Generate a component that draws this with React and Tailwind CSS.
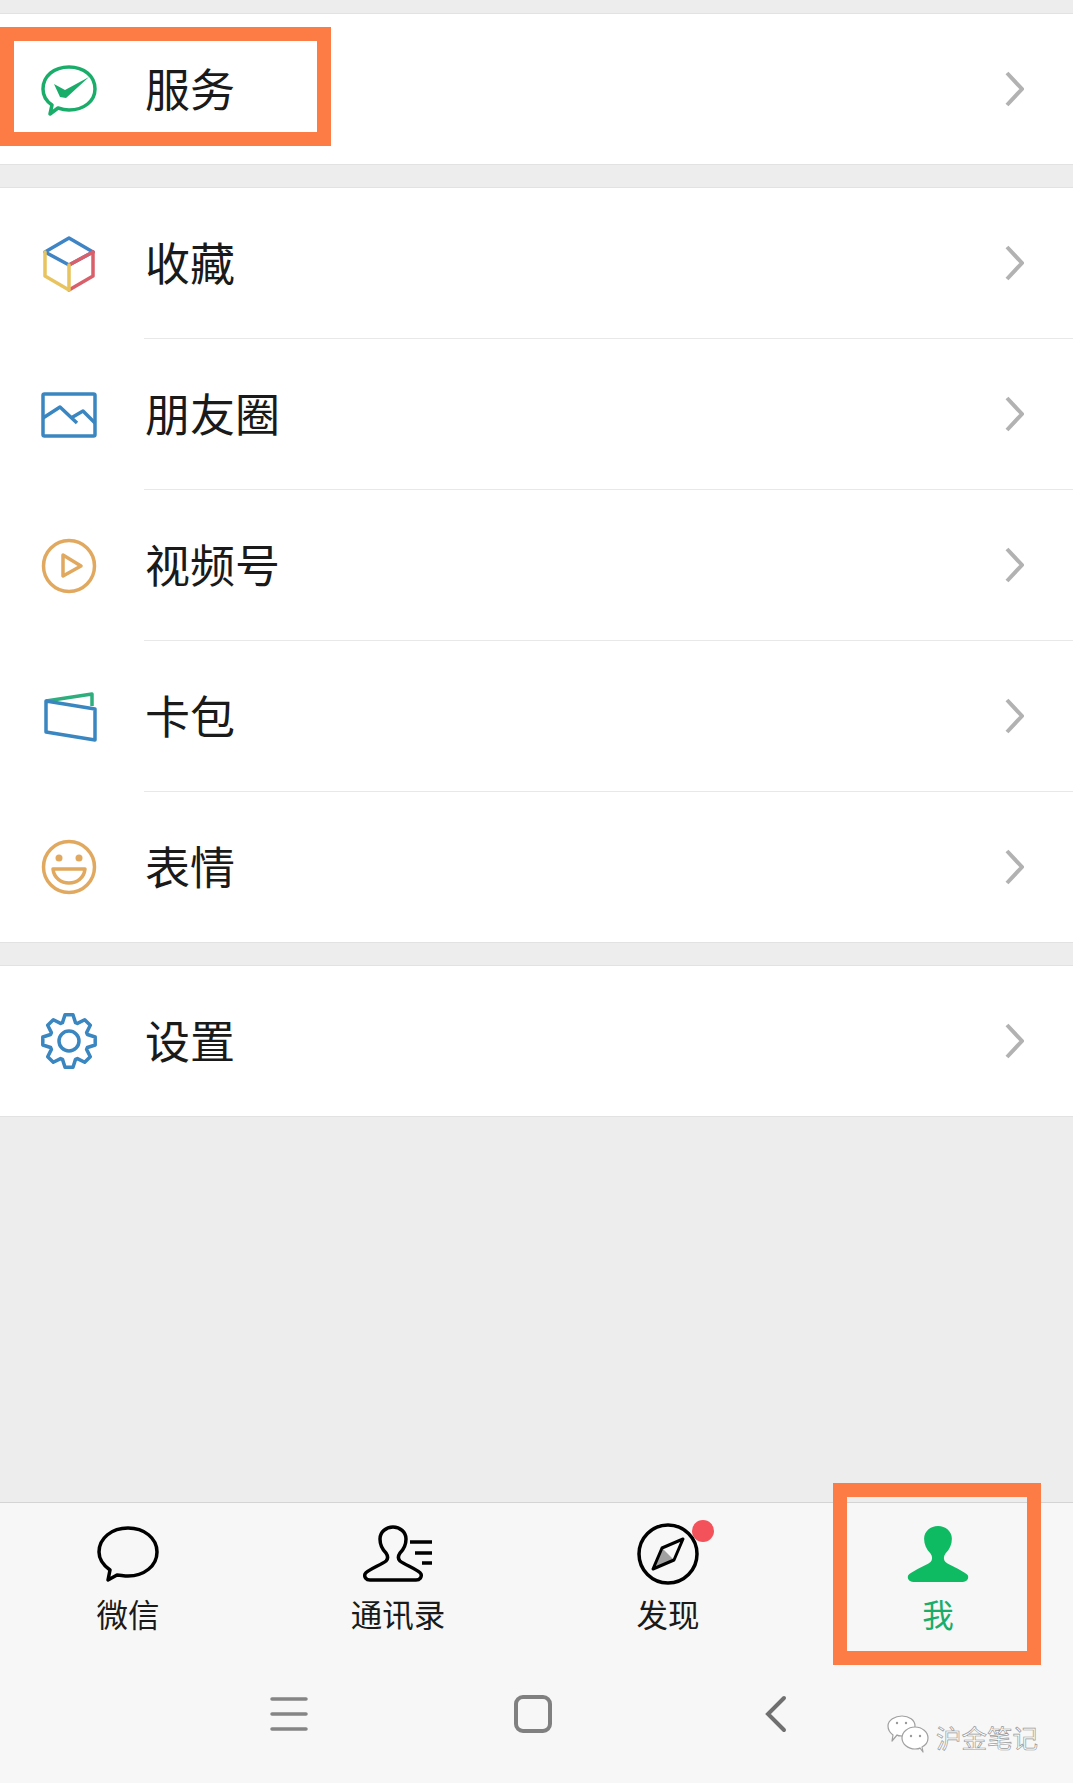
import React from 'react';

const GREEN = '#1aad6a';
const BLUE = '#3a86c0';
const GOLD = '#e0a95f';

// 8 tooth gear outline, points worked out once
const gearPath = () => {
  const pts = [];
  for (let i = 0; i < 8; i++) {
    const a = (i * Math.PI) / 4 - Math.PI / 2;
    const at = (r, d) => [29 + r * Math.cos(a + d), 29 + r * Math.sin(a + d)].map((n) => n.toFixed(1)).join(' ');
    pts.push(at(19.5, -0.34), at(26.5, -0.15), at(26.5, 0.15), at(19.5, 0.34));
  }
  return 'M' + pts.join(' L') + ' Z';
};

const ServiceIcon = () => (
  <svg width="58" height="58" viewBox="0 0 58 58" fill="none">
    <path d="M10 54 L12 45 C6 41 3 35 3 29 C3 16 14 7 29 7 C44 7 55 16 55 29 C55 41 44 50 29 50 C25 50 21 49 18 48 Z" stroke={GREEN} strokeWidth="3.5" strokeLinejoin="round" />
    <path d="M14 24 L25 30 L49 17 L26 38 L20 37 Z" fill={GREEN} />
  </svg>
);

const CubeIcon = () => (
  <svg width="58" height="60" viewBox="0 0 58 60" fill="none" strokeWidth="3.5" strokeLinejoin="round" strokeLinecap="round">
    <path d="M5 19 L29 5 L53 19 L29 32 Z" stroke="#3f84c4" />
    <path d="M53 19 L53 43 L29 57" stroke="#d9606a" />
    <path d="M29 32 L53 19" stroke="#d9606a" />
    <path d="M5 19 L5 43 L29 57 L29 32" stroke="#e8c45f" />
  </svg>
);

const MomentsIcon = () => (
  <svg width="58" height="58" viewBox="0 0 58 58" fill="none" stroke={BLUE} strokeWidth="3.5" strokeLinejoin="round">
    <rect x="3" y="9" width="52" height="42" rx="1.5" />
    <path d="M3 33 L20 22 L37 38 M31 33 L43 26 L55 38" />
  </svg>
);

const PlayIcon = () => (
  <svg width="58" height="58" viewBox="0 0 58 58" fill="none" stroke={GOLD} strokeWidth="3.5" strokeLinejoin="round">
    <circle cx="29" cy="30" r="25.5" />
    <path d="M23 19 L41 30 L23 40 Z" />
  </svg>
);

const CardIcon = () => (
  <svg width="58" height="58" viewBox="0 0 58 58" fill="none" strokeWidth="3.5" strokeLinejoin="round">
    <path d="M6 14 L52 7 L52 19" stroke="#2fae7d" />
    <path d="M6 14 L55 22 L55 53 L6 45 Z" stroke={BLUE} />
  </svg>
);

const SmileIcon = () => (
  <svg width="58" height="58" viewBox="0 0 58 58" fill="none" stroke={GOLD} strokeWidth="3.5" strokeLinejoin="round">
    <circle cx="29" cy="29" r="25.5" />
    <circle cx="19" cy="20" r="3.5" fill={GOLD} stroke="none" />
    <circle cx="39" cy="20" r="3.5" fill={GOLD} stroke="none" />
    <path d="M13 31 H45 C44 40 37 45 29 45 C21 45 14 40 13 31 Z" />
  </svg>
);

const GearIcon = () => (
  <svg width="58" height="58" viewBox="0 0 58 58" fill="none" stroke={BLUE} strokeWidth="3.5" strokeLinejoin="round">
    <path d={gearPath()} />
    <circle cx="29" cy="29" r="10" />
  </svg>
);

const Chevron = () => (
  <svg width="20" height="36" viewBox="0 0 20 36" fill="none" stroke="#b2b2b2" strokeWidth="4">
    <path d="M3 2 L18 18 L3 34" />
  </svg>
);

const personPath = 'M7 55 H53 C57 55 59 52 58 49 C56 45 42 40 37 36 C35 34 35 31 37 28 C41 24 43 19 43 14 C43 7 37 2 30 2 C23 2 17 7 17 14 C17 19 19 24 23 28 C25 31 25 34 23 36 C18 40 4 45 2 49 C1 52 3 55 7 55 Z';

const ChatTab = () => (
  <svg width="62" height="58" viewBox="0 0 62 58" fill="none" stroke="#000" strokeWidth="3.5" strokeLinejoin="round">
    <path d="M11 55 L13 45 C6 40 2 34 2 27 C2 13 15 3 31 3 C47 3 60 13 60 27 C60 41 47 51 31 51 C27 51 23 50 20 50 Z" />
  </svg>
);

const ContactsTab = () => (
  <svg width="70" height="58" viewBox="0 0 70 58" fill="none" stroke="#000" strokeWidth="3.5" strokeLinejoin="round">
    <path d={personPath} />
    <path d="M47 17 H69 M52 28 H69 M59 38 H69" />
  </svg>
);

const CompassTab = () => (
  <svg width="62" height="62" viewBox="0 0 62 62" fill="none" stroke="#000" strokeWidth="3.5" strokeLinejoin="round">
    <circle cx="31" cy="31" r="29" />
    <path d="M46 16 L37 37 L16 46 L25 25 Z" strokeWidth="3" />
    <path d="M37 37 L16 46 L25 25 Z" fill="#000" fillOpacity="0.35" stroke="none" />
  </svg>
);

const MeTab = () => (
  <svg width="62" height="58" viewBox="1 1 58 55" fill="#0fbb62" preserveAspectRatio="none">
    <path d={personPath} />
  </svg>
);

const Row = ({ icon, label, last }) => (
  <div className="flex h-[150px] items-stretch">
    <div className="flex w-[144px] items-center pl-[40px]">{icon}</div>
    <div className={'flex flex-1 items-center justify-between pl-[1px] pr-[49px] ' + (last ? '' : 'h-[151px] border-b border-[#e8e8e8]')}>
      <span className="-mt-[4px] text-[45px] leading-none text-[#1a1a1a]">{label}</span>
      <Chevron />
    </div>
  </div>
);

const Tab = ({ icon, label, active, dot }) => (
  <div className="flex flex-col items-center pt-[20px]">
    <div className="relative flex h-[62px] items-center justify-center">
      {icon}
      {dot && <span className="absolute left-[55px] top-[-3px] h-[22px] w-[22px] rounded-full bg-[#f4525a]" />}
    </div>
    <span className={'mt-[10px] text-[31.5px] leading-[36px] ' + (active ? 'text-[#1aad6a]' : 'text-[#1a1a1a]')}>{label}</span>
  </div>
);

const App = () => {
  return (
    <div className="relative flex h-[1783px] w-[1073px] flex-col overflow-hidden bg-[#ededed] font-['Noto_Sans_CJK_SC','Noto_Sans',sans-serif]">
      <div className="mt-[13px] border-y border-[#e2e2e2] bg-white">
        <Row icon={<ServiceIcon />} label="服务" last />
      </div>

      <div className="mt-[22px] border-y border-[#e2e2e2] bg-white">
        <div className="h-[151px]"><Row icon={<CubeIcon />} label="收藏" /></div>
        <div className="h-[151px]"><Row icon={<MomentsIcon />} label="朋友圈" /></div>
        <div className="h-[151px]"><Row icon={<PlayIcon />} label="视频号" /></div>
        <div className="h-[151px]"><Row icon={<CardIcon />} label="卡包" /></div>
        <Row icon={<SmileIcon />} label="表情" last />
      </div>

      <div className="mt-[22px] border-y border-[#e2e2e2] bg-white">
        <Row icon={<GearIcon />} label="设置" last />
      </div>

      <div className="flex-1" />

      <div className="h-[281px] border-t border-[#d4d4d4] bg-[#f7f7f7]">
        <div className="-ml-[7px] grid h-[130px] w-[1080px] grid-cols-4">
          <Tab icon={<ChatTab />} label="微信" />
          <Tab icon={<ContactsTab />} label="通讯录" />
          <Tab icon={<CompassTab />} label="发现" dot />
          <Tab icon={<MeTab />} label="我" active />
        </div>

        <div className="mt-[60px] flex h-[42px] items-center pl-[166px]">
          <div className="flex w-[245px] justify-center">
            <svg width="38" height="34" viewBox="0 0 38 34" stroke="#858585" strokeWidth="3.5" strokeLinecap="round">
              <path d="M2 2 H36 M2 17 H36 M2 32 H36" />
            </svg>
          </div>
          <div className="flex w-[243px] justify-center">
            <div className="h-[38px] w-[38px] rounded-[9px] border-[4px] border-[#808080]" />
          </div>
          <div className="flex w-[243px] justify-center">
            <svg width="22" height="38" viewBox="0 0 22 38" fill="none" stroke="#707070" strokeWidth="4" strokeLinecap="round">
              <path d="M19 3 L3 19 L19 35" />
            </svg>
          </div>
        </div>
      </div>

      {/* orange highlight boxes on top of the screenshot */}
      <div className="absolute left-0 top-[27px] h-[119px] w-[331px] border-[14px] border-[#fd7b45]" />
      <div className="absolute left-[833px] top-[1483px] h-[182px] w-[208px] border-[14px] border-[#fd7b45]" />

      {/* watermark */}
      <div className="absolute left-[887px] top-[1715px] flex items-center">
        <svg width="42" height="38" viewBox="0 0 42 38" fill="#fff" stroke="#a0a0a0" strokeWidth="1.2" strokeLinejoin="round">
          <path d="M5 26 L6 20 C2 17 1 14 1 11 C1 5 8 1 15 1 C22 1 28 5 28 11 C28 17 22 21 15 21 C13 21 11 21 10 20 Z" />
          <path d="M36 37 L35 32 C39 30 41 26 41 23 C41 17 35 12 28 12 C21 12 15 17 15 23 C15 29 21 34 28 34 C30 34 32 34 33 33 Z" />
          <circle cx="10" cy="8" r="1.2" fill="#9a9a9a" stroke="none" />
          <circle cx="19" cy="8" r="1.2" fill="#9a9a9a" stroke="none" />
          <circle cx="24" cy="21" r="1.2" fill="#9a9a9a" stroke="none" />
          <circle cx="33" cy="21" r="1.2" fill="#9a9a9a" stroke="none" />
        </svg>
        <span className="ml-[7px] mt-[6px] text-[25.5px] leading-none text-white [-webkit-text-stroke:0.7px_#999]">沪金笔记</span>
      </div>
    </div>
  );
};

export default App;
